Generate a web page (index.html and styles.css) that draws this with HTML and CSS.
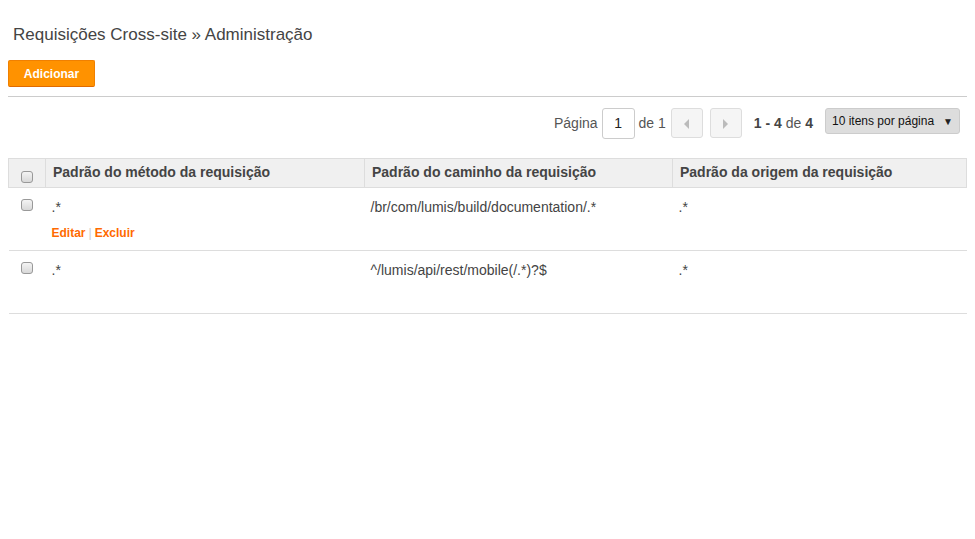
FILE: index.html
```html
<!DOCTYPE html>
<html lang="pt-BR">
<head>
    <meta charset="UTF-8">
    <meta name="viewport" content="width=device-width, initial-scale=1.0">
    <title>Requisições Cross-site</title>
    <link rel="stylesheet" href="styles.css">
</head>
<body>

<h1 class="title">Requisições Cross-site » Administração</h1>

<div class="toolbar">
    <button class="btn-add">Adicionar</button>
</div>

<div class="pager">
    <span class="pager-text">Página</span>
    <span class="page-input">1</span>
    <span class="pager-text">de 1</span>
    <span class="page-btn prev"><i class="tri-left"></i></span>
    <span class="page-btn next"><i class="tri-right"></i></span>
    <span class="pager-text range"><b>1 - 4</b> de <b>4</b></span>
    <span class="per-page">10 itens por página <span class="arrow">▼</span></span>
</div>

<table class="grid">
    <colgroup>
        <col class="col-check">
        <col class="col-method">
        <col class="col-path">
        <col>
    </colgroup>
    <thead>
        <tr>
            <th class="cell-check"><span class="check"></span></th>
            <th>Padrão do método da requisição</th>
            <th>Padrão do caminho da requisição</th>
            <th>Padrão da origem da requisição</th>
        </tr>
    </thead>
    <tbody>
        <tr>
            <td class="cell-check"><span class="check"></span></td>
            <td>
                <div class="cell-text">.*</div>
                <div class="actions"><a href="#">Editar</a><span class="sep">|</span><a href="#">Excluir</a></div>
            </td>
            <td><div class="cell-text">/br/com/lumis/build/documentation/.*</div></td>
            <td><div class="cell-text">.*</div></td>
        </tr>
        <tr>
            <td class="cell-check"><span class="check"></span></td>
            <td>
                <div class="cell-text">.*</div>
                <div class="actions hidden"><a href="#">Editar</a><span class="sep">|</span><a href="#">Excluir</a></div>
            </td>
            <td><div class="cell-text">^/lumis/api/rest/mobile(/.*)?$</div></td>
            <td><div class="cell-text">.*</div></td>
        </tr>
    </tbody>
</table>

</body>
</html>
```

FILE: styles.css
```css
body {
    margin: 8px;
    font-family: "Liberation Sans", Arial, sans-serif;
    color: #444;
    background: #fff;
}

.title {
    margin: 17px 0 0 0;
    padding-left: 5px;
    font-size: 17px;
    line-height: 20px;
    font-weight: normal;
    color: #444;
}

.toolbar {
    margin-top: 15px;
    padding-bottom: 9px;
    border-bottom: 1px solid #ccc;
}

.btn-add {
    display: block;
    width: 87px;
    height: 27px;
    padding: 0;
    font-family: "Liberation Sans", Arial, sans-serif;
    font-size: 12px;
    font-weight: bold;
    color: #fff;
    background: #ff9200;
    border: 1px solid #f08000;
    border-bottom-color: #e06a00;
    border-radius: 2px;
    cursor: pointer;
}

.pager {
    display: flex;
    justify-content: flex-end;
    align-items: flex-start;
    margin-top: 11px;
    padding-right: 7px;
    font-size: 14px;
    color: #555;
}

.pager-text {
    line-height: 31px;
}

.page-input {
    box-sizing: border-box;
    width: 33px;
    height: 31px;
    margin: 0 4px;
    line-height: 29px;
    text-align: center;
    color: #222;
    border: 1px solid #ccc;
    border-radius: 3px;
}

.page-btn {
    box-sizing: border-box;
    display: flex;
    align-items: center;
    justify-content: center;
    width: 32px;
    height: 30px;
    background: #f5f5f5;
    border: 1px solid #ddd;
    border-radius: 3px;
}

.prev {
    margin-left: 5px;
}

.next {
    margin-left: 7px;
}

.tri-left, .tri-right {
    width: 0;
    height: 0;
    margin-top: 2px;
    border-top: 5px solid transparent;
    border-bottom: 5px solid transparent;
}

.tri-left {
    border-right: 5px solid #bbb;
}

.tri-right {
    border-left: 5px solid #bbb;
}

.range {
    margin: 0 12px;
    color: #555;
}

.range b {
    color: #444;
}

.per-page {
    box-sizing: border-box;
    display: flex;
    justify-content: space-between;
    align-items: center;
    width: 135px;
    height: 26px;
    padding: 0 6px 0 6px;
    font-size: 12px;
    color: #111;
    background: #ddd;
    border: 1px solid #ccc;
    border-radius: 3px;
}

.per-page .arrow {
    font-size: 10px;
    color: #222;
}

.grid {
    width: 100%;
    margin-top: 19px;
    table-layout: fixed;
    border-collapse: collapse;
    font-size: 14px;
}

.col-check {
    width: 37px;
}

.col-method {
    width: 319px;
}

.col-path {
    width: 308px;
}

.grid th {
    height: 28px;
    padding: 5px 7px 7px 7px;
    box-sizing: border-box;
    text-align: left;
    vertical-align: top;
    font-weight: bold;
    line-height: 16px;
    color: #444;
    background: #f0f0f0;
    border: 1px solid #ddd;
}

.grid td {
    padding: 11px 7px 10px 6px;
    vertical-align: top;
    line-height: 16px;
    border-bottom: 1px solid #ddd;
}

.grid th.cell-check {
    padding: 12px 0 0 0;
    text-align: center;
}

.grid td.cell-check {
    padding: 11px 0 0 0;
    text-align: center;
}

.check {
    display: inline-block;
    box-sizing: border-box;
    width: 12px;
    height: 12px;
    vertical-align: top;
    border: 1px solid #999;
    border-radius: 3px;
    background: linear-gradient(#f4f4f4, #d8d8d8);
}

.cell-text {
    color: #444;
}

.actions {
    margin-top: 11px;
    font-size: 12px;
    line-height: 14px;
}

.actions a {
    color: #ff6a00;
    font-weight: bold;
    text-decoration: none;
}

.actions .sep {
    margin: 0 3px;
    color: #ccc;
}

.hidden {
    visibility: hidden;
}
```
